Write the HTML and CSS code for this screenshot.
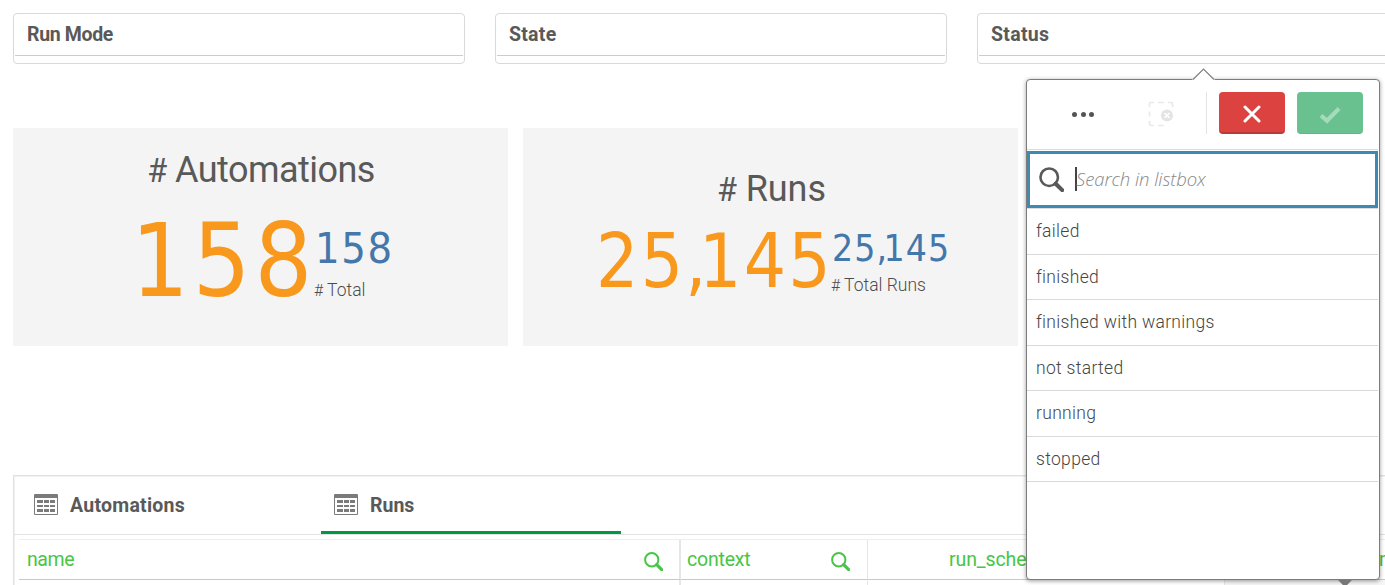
FILE: index.html
```html
<!DOCTYPE html>
<html lang="en">
<head>
<meta charset="utf-8">
<title>Automation runs</title>
<link rel="stylesheet" href="styles.css">
</head>
<body>
<svg class="defs" width="0" height="0">
  <symbol id="search" viewBox="0 0 24 24"><circle cx="9.800" cy="9.800" r="8.400" fill="none" stroke="currentColor" stroke-width="2.500"/><path d="M16 16l6.300 6.200" stroke="currentColor" stroke-width="4" stroke-linecap="round"/></symbol>
  <symbol id="table" viewBox="0 0 24 21"><rect width="24" height="21" rx="1" fill="#7b7b7b"/><path d="M1 4h22v16H1z" fill="#fff"/><path d="M3 6h6v3H3zm7 0h5v3h-5zm6 0h5v3h-5zM3 11h6v2H3zm7 0h5v2h-5zm6 0h5v2h-5zM3 15h6v3H3zm7 0h5v3h-5zm6 0h5v3h-5z" fill="#7b7b7b"/></symbol>
</svg>
<main class="sheet">
  <section class="filters">
    <div class="filter"><h2 class="t-mode">Run Mode</h2></div>
    <div class="filter"><h2 class="t-state">State</h2></div>
    <div class="filter"><h2 class="t-status">Status</h2></div>
  </section>
  <section class="kpis">
    <article class="kpi kpi-a">
      <h3><span class="hash">#</span> Automations</h3>
      <div class="values"><div class="main">158</div><div class="side"><div class="second">158</div><div class="label"><span class="hash">#</span> Total</div></div></div>
    </article>
    <article class="kpi kpi-r">
      <h3><span class="hash">#</span> Runs</h3>
      <div class="values"><div class="main">25<span class="comma">,</span>145</div><div class="side"><div class="second">25<span class="comma">,</span>145</div><div class="label"><span class="hash">#</span> Total Runs</div></div></div>
    </article>
  </section>
  <section class="container">
    <nav class="tabs">
      <div class="tab"><svg class="ti"><use href="#table"/></svg><span class="t-auto">Automations</span></div>
      <div class="tab active"><svg class="ti"><use href="#table"/></svg><span class="t-runs">Runs</span></div>
    </nav>
    <div class="grid">
      <div class="th c1"><span class="t-name">name</span><svg><use href="#search"/></svg></div>
      <div class="th c2"><span class="t-context">context</span><svg><use href="#search"/></svg></div>
      <div class="th c3"><span class="t-sched">run_scheduled</span></div>
      <div class="th c4"><span>r</span></div>
      <div class="td c1"></div><div class="td c2"></div><div class="td c3"></div><div class="td c4"></div>
    </div>
  </section>
</main>
<aside class="popover">
  <svg class="arrow" viewBox="0 0 24 12"><path d="M0 12L1 11 11.500 1 22 11l1 1z" fill="#fff"/><path d="M1 11.500L11.500 1 22 11.500" fill="none" stroke="#808080" stroke-width="1.200"/></svg>
  <div class="bar">
    <div class="dots"><i></i><i></i><i></i></div>
    <svg class="clear" viewBox="0 0 26 26"><path d="M1.500 6V3q0-1.500 1.500-1.500h3M10 1.500h6M20 1.500h3q1.500 0 1.500 1.500v3M1.500 10.500v5M1.500 20v3q0 1.500 1.500 1.500h3M10 24.500h6" fill="none" stroke="#e9e9e9" stroke-width="1.700"/><circle cx="19" cy="14.500" r="6" fill="#e4e4e4"/><path d="M16.500 12l5 5m0-5l-5 5" stroke="#fff" stroke-width="1.700"/></svg>
    <div class="sep"></div>
    <div class="btn cancel"><svg viewBox="0 0 18 18"><path d="M2 2l14 14M16 2L2 16" stroke="#fff" stroke-width="3" stroke-linecap="round"/></svg></div>
    <div class="btn ok"><svg class="check" viewBox="0 0 22 18"><path d="M2 9.500l6 5.300L20 2.500" fill="none" stroke="#a5dabb" stroke-width="4.200"/></svg></div>
  </div>
  <div class="search"><svg><use href="#search"/></svg><span class="caret"></span><span class="ph">Search in listbox</span></div>
  <ul>
    <li><span class="l1">failed</span></li><li><span class="l2">finished</span></li><li><span class="l3">finished with warnings</span></li><li><span class="l4">not started</span></li><li><span class="l5">running</span></li><li><span class="l6">stopped</span></li>
  </ul>
</aside>
<div class="marker"></div>
</body>
</html>
```
FILE: styles.css
```css
* { box-sizing: border-box; }
html, body { margin: 0; width: 1385px; height: 585px; overflow: hidden; background: #fff; }
body { position: relative; font-family: Roboto, "Open Sans", sans-serif; color: #595959; }
.defs { position: absolute; }
h2, h3, ul { margin: 0; padding: 0; list-style: none; }
.sheet { width: 1429px; padding: 13px 0 0 13px; }
.filters { display: flex; gap: 30px; }
.filter { width: 452px; height: 51px; flex: none; border: 1px solid #d9d9d9; border-radius: 4px; padding: 0 1px; }
.filter h2 { height: 42px; border-bottom: 1px solid #ccc; padding-left: 12px; font-size: 19.500px; line-height: 42px; font-weight: 700; letter-spacing: -0.350px; }
.filter .t-state { letter-spacing: 0.250px; }
.filter .t-status { letter-spacing: 0.300px; }
.kpis { display: flex; gap: 15px; margin-top: 64px; }
.kpi { width: 495px; height: 218px; background: #f4f4f4; white-space: nowrap; }
.kpi h3 { font-size: 36px; line-height: 42px; font-weight: 400; text-align: center; }
.hash { font-size: 0.900em; }
.kpi-a h3 { padding: 21px 0 0 1px; letter-spacing: -0.550px; }
.kpi-r h3 { padding: 40px 0 0 2px; letter-spacing: -0.100px; }
.values { display: flex; }
.main, .second { font-family: "DejaVu Sans Condensed", "DejaVu Sans", sans-serif; font-stretch: condensed; }
.main { color: #f8981d; }
.second { color: #4477aa; }
.kpi-a .values { padding-left: 118px; }
.kpi-a .main { width: 183px; font-size: 101px; line-height: 118px; letter-spacing: 4px; margin-top: 10px; }
.kpi-a .second { font-size: 43px; line-height: 50px; letter-spacing: 1.700px; margin: 31px 0 0 1px; }
.label { font-size: 17.500px; line-height: 20px; font-weight: 300; color: #4c4c4c; }
.kpi-a .label { margin-top: 7px; }
.kpi-r .values { padding-left: 73px; }
.kpi-r .main { width: 235px; font-size: 74px; line-height: 86px; letter-spacing: 2.300px; margin-top: 7px; }
.kpi-r .second { font-size: 37px; line-height: 44px; letter-spacing: 1.100px; margin: 16px 0 0 1px; }
.kpi-r .label { margin-top: 4px; }
.comma { letter-spacing: -0.100em; }
.container { margin-top: 129px; border: 1px solid #e1e1e1; box-shadow: inset 1px 1px #f1f1f1; height: 120px; }
.tabs { display: flex; height: 59px; padding-left: 7px; border-bottom: 1px solid #e3e3e3; }
.tab { width: 300px; display: flex; align-items: center; gap: 12px; height: 58px; font-size: 19.500px; font-weight: 700; border-bottom: 3px solid transparent; padding: 3px 0 0 13px; }
.t-auto { letter-spacing: 0.250px; }
.tab.active { border-color: #009845; }
.ti { width: 24px; height: 21px; margin-top: -2px; }
.grid { display: grid; grid-template-columns: 662px 187px 357px 200px; margin: 4px 0 0 5px; border-top: 1px solid #eee; }
.th { height: 40px; border-bottom: 1px solid #c8c8c8; color: #46c646; font-size: 19.500px; font-weight: 400; display: flex; align-items: center; justify-content: space-between; padding: 0 16px 1px 8px; }
.t-name { letter-spacing: -0.400px; }
.t-context { letter-spacing: -0.200px; }
.th svg { width: 19px; height: 19px; margin-top: 4px; }
.c1 { border-right: 2px solid #e6e6e6; }
.c2 { border-right: 1px solid #e6e6e6; }
.c2.th { padding: 0 17px 1px 6px; }
.c3 { border-right: 1px solid #e6e6e6; }
.c3.th { padding-left: 81px; letter-spacing: -0.100px; }
.c4.th { padding-left: 154px; }
.td { height: 20px; }
.td.c4 { background: #f5f5f5; }
.popover { position: absolute; left: 1026px; top: 79px; width: 354px; height: 501px; border: 1px solid #7c7c7c; border-radius: 4px; background: #fff; box-shadow: 0 1px 4px rgba(0,0,0,.4); }
.arrow { position: absolute; left: 165px; top: -12px; width: 24px; height: 12px; }
.bar { display: flex; height: 70px; padding: 12px 15px 0 45px; border-bottom: 1px solid #ddd; margin-right: 1px; }
.dots { display: flex; gap: 3.500px; padding-top: 20px; width: 76px; }
.dots i { width: 5px; height: 5px; border-radius: 50%; background: #545454; }
.clear { width: 26px; height: 26px; margin: 9px 32px 0 0; }
.sep { width: 1px; height: 42px; background: #e4e4e4; }
.btn { width: 66px; height: 42px; margin-left: 12px; border-radius: 4px; display: flex; align-items: center; justify-content: center; padding-top: 4px; }
.btn svg { width: 18px; height: 18px; }
.btn .check { width: 22px; }
.cancel { background: #dc423f; border-bottom: 2px solid #b93b38; }
.ok { background: #68c18f; border-bottom: 1px solid #5fb985; }
.search { display: flex; align-items: center; height: 57px; width: 351px; margin-top: 1px; border: 3px solid #3f8ab3; padding-left: 9px; }
.search svg { width: 25px; height: 25px; }
.caret { width: 2px; height: 24px; margin: -1px 0 0 11px; background: #444; }
.ph { margin: -3px 0 0 -1px; font-family: "Open Sans", "Noto Sans", sans-serif; font-style: italic; font-weight: 350; font-size: 18.500px; letter-spacing: -0.050px; color: #888; white-space: nowrap; }
.popover ul { border-top: 1px solid #ddd; margin-right: 1px; }
.popover li { height: 45.500px; border-bottom: 1px solid #d9d9d9; padding-left: 9px; font-size: 17.500px; line-height: 44px; font-weight: 300; letter-spacing: 0.320px; color: #454545; }
.marker { position: absolute; left: 1338px; top: 580px; width: 14px; height: 5px; background: #777; clip-path: polygon(0 0, 100% 0, 65% 100%, 35% 100%); }
```
